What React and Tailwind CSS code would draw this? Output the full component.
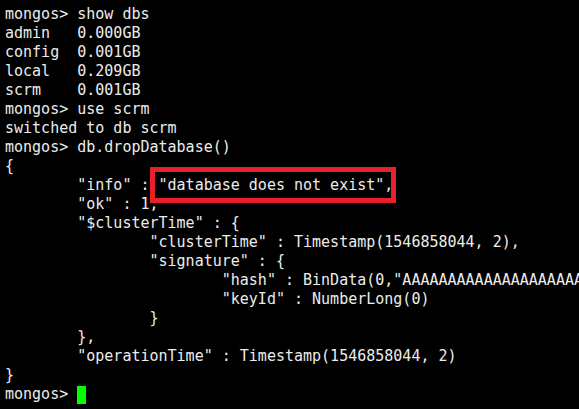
const T = '        ';

const lines = [
  'mongos> show dbs',
  'admin   0.000GB',
  'config  0.001GB',
  'local   0.209GB',
  'scrm    0.001GB',
  'mongos> use scrm',
  'switched to db scrm',
  'mongos> db.dropDatabase()',
  '{',
  `${T}"info" : "database does not exist",`,
  `${T}"ok" : 1,`,
  `${T}"$clusterTime" : {`,
  `${T}${T}"clusterTime" : Timestamp(1546858044, 2),`,
  `${T}${T}"signature" : {`,
  `${T}${T}${T}"hash" : BinData(0,"AAAAAAAAAAAAAAAAAAAAAAAAAAA="),`,
  `${T}${T}${T}"keyId" : NumberLong(0)`,
  `${T}${T}}`,
  `${T}},`,
  `${T}"operationTime" : Timestamp(1546858044, 2)`,
  '}',
];

export default function App() {
  return (
    <div className="relative w-[579px] h-[409px] overflow-hidden bg-black">
      <div className="pl-[5px] pt-[5px] font-['DejaVu_Sans_Mono',monospace] text-[15px] leading-[19px] text-[#ececec] whitespace-pre">
        {lines.map((line, i) => (
          <div key={i} className="h-[19px]">{line}</div>
        ))}
        <div className="flex h-[19px] items-center">
          <span>mongos&gt; </span>
          <span className="inline-block w-[9px] h-[18px] bg-[#00ff00]" />
        </div>
      </div>
      {/* red annotation box */}
      <div className="absolute left-[150px] top-[167px] w-[246px] h-[36px] border-[5px] border-[#e8202a]" />
    </div>
  );
}
